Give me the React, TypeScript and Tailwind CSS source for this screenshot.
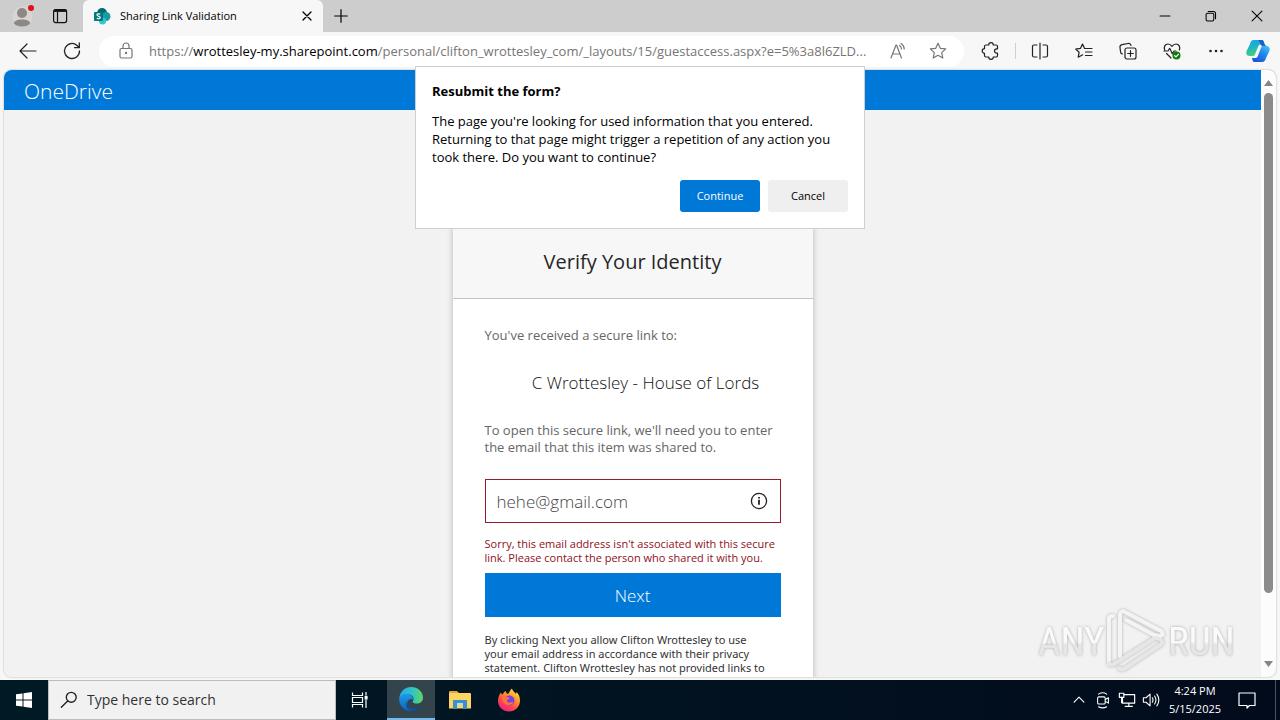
import type { ReactNode } from "react";

const bar = "flex shrink-0 items-center justify-center";

function IconButton({ label, className, children }: { label: string; className: string; children: ReactNode }) {
  return (
    <button type="button" aria-label={label} className={`${bar} ${className}`}>
      {children}
    </button>
  );
}

function Line({ size = 20, width = 1.2, children }: { size?: number; width?: number; children: ReactNode }) {
  return (
    <svg width={size} height={size} viewBox="0 0 20 20" fill="none" stroke="currentColor" strokeWidth={width} strokeLinecap="round" strokeLinejoin="round" aria-hidden="true">
      {children}
    </svg>
  );
}

function TabStrip() {
  return (
    <header className="flex h-8 shrink-0 bg-[#cdcdcd] text-black">
      <div className="flex w-[83px] shrink-0 items-center rounded-br-md pl-3">
        <IconButton label="Profile" className="h-8 w-6">
          <svg width="24" height="24" viewBox="0 0 24 24" aria-hidden="true">
            <circle cx="10.5" cy="12.5" r="10" fill="#d9d5d3" />
            <circle cx="10" cy="9" r="5" fill="#8c8886" />
            <path d="M2 19.5c0-3 3.500-4 8-4s8 1 8 4c-1.500 2-4.500 3-8 3s-6.500-1-8-3z" fill="#8c8886" />
            <circle cx="19" cy="4" r="3" fill="#e0101c" />
          </svg>
        </IconButton>
        <IconButton label="Tab actions" className="ml-2 h-8 w-8">
          <svg width="16" height="16" viewBox="0 0 16 16" fill="none" stroke="#111" strokeWidth="1.2" aria-hidden="true">
            <rect x="1.600" y="1.600" width="13" height="13" rx="2" />
            <path d="M2 3.200h12.500M5.500 4v10.500" />
            <path d="M2 2.600h12.500" strokeWidth="2" />
          </svg>
        </IconButton>
      </div>
      <div className="flex w-60 shrink-0 items-center rounded-t-md bg-[#f7f7f7] pl-[11px]">
        <svg width="17" height="17" viewBox="0 0 17 17" aria-hidden="true">
          <circle cx="8" cy="5" r="5" fill="#036c70" />
          <circle cx="12" cy="8.500" r="4.500" fill="#1a9ba1" />
          <circle cx="8.500" cy="13" r="3.500" fill="#37c6d0" />
          <rect x="0" y="4" width="9" height="9" rx="1" fill="#03787c" />
          <path d="M6.300 6.300c-1.500-.8-3.300-.5-3.300.7 0 1.500 3.300 1.100 3.300 2.600 0 1.200-2 1.500-3.500.6" stroke="#fff" strokeWidth="1.200" fill="none" />
        </svg>
        <span className="ml-[9px] flex-1 text-[11px]">Sharing Link Validation</span>
        <IconButton label="Close tab" className="h-8 w-8">
          <Line size={16} width={1.6}><path d="M5 5l10 10M15 5L5 15" /></Line>
        </IconButton>
      </div>
      <IconButton label="New tab" className="h-8 w-9">
        <Line size={18} width={1.3}><path d="M10 3v14M3 10h14" /></Line>
      </IconButton>
      <div className="ml-auto flex">
        <IconButton label="Minimize" className="h-8 w-[46px]">
          <Line size={14} width={1.5}><path d="M3 10h14" /></Line>
        </IconButton>
        <IconButton label="Restore" className="h-8 w-[46px]">
          <Line size={14} width={1.5}><rect x="3" y="6" width="11" height="11" rx="2" /><path d="M6 3.500h7.500a3 3 0 0 1 3 3V14" /></Line>
        </IconButton>
        <IconButton label="Close" className="h-8 w-[46px]">
          <Line size={14} width={1.5}><path d="M3 3l14 14M17 3L3 17" /></Line>
        </IconButton>
      </div>
    </header>
  );
}

function Toolbar() {
  return (
    <nav className="flex h-[38px] shrink-0 items-center bg-[#f7f7f7] pr-0.5 pl-1.5 text-[#222]">
      <IconButton label="Back" className="h-8 w-11">
        <Line><path d="M18 10H2.500M9 3L2 10l7 7" /></Line>
      </IconButton>
      <IconButton label="Refresh" className="h-8 w-11">
        <Line width={1.3}><path d="M17.500 10a7.500 7.500 0 1 1-2.500-5.600L17 6.500M17.300 2v4.700h-4.700" /></Line>
      </IconButton>
      <div className="ml-[5px] flex h-[31px] min-w-0 flex-1 items-center rounded-full bg-white pr-1 pl-[17px] text-[#767676]">
        <Line><rect x="4" y="7.500" width="12" height="9.500" rx="1.500" /><path d="M7 7.500V5a3 3 0 0 1 6 0v2.500" /><circle cx="10" cy="12" r=".6" fill="currentColor" /></Line>
        <div role="textbox" aria-label="Address and search bar" tabIndex={0} className="ml-[13px] min-w-0 flex-1 text-[13px] leading-5 whitespace-nowrap">
          https://<span className="text-black">wrottesley-my.sharepoint.com</span>/personal/clifton_wrottesley_com/_layouts/15/guestaccess.aspx?e=5%3a8l6ZLD...
        </div>
        <IconButton label="Read aloud" className="h-8 w-9">
          <Line><path d="M3 17L8 4h.5l5 13M4.700 13h7M11.500 4.500c1.300.8 2 2 2 3.500M13 2.500c2 1.200 3.200 3 3.200 5.500" /></Line>
        </IconButton>
        <IconButton label="Add this page to favorites" className="h-8 w-11">
          <Line><path d="M10 2.300l2.300 5 5.400.6-4 3.700 1.100 5.400-4.800-2.700L5.200 17l1.100-5.400-4-3.700 5.400-.6z" /></Line>
        </IconButton>
      </div>
      <IconButton label="Extensions" className="ml-[5px] h-8 w-11">
        <Line><path d="M5 4h2.700a2.300 2.300 0 0 1 4.600 0H15a1.500 1.500 0 0 1 1.500 1.500v2.300h-.8a2.200 2.200 0 0 0 0 4.400h.8v2.300A1.500 1.500 0 0 1 15 16h-2.700a2.300 2.300 0 0 1-4.600 0H5a1.500 1.500 0 0 1-1.500-1.500v-2.200a2.300 2.300 0 0 1 0-4.600V5.500A1.500 1.500 0 0 1 5 4z" /></Line>
      </IconButton>
      <span className="mx-0.5 h-4 w-px shrink-0 bg-[#cfcfcf]" />
      <IconButton label="Split screen" className="h-8 w-11">
        <Line><path d="M10 2v16M7 4H4a1.500 1.500 0 0 0-1.500 1.500v9A1.500 1.500 0 0 0 4 16h3M13 4h3a1.500 1.500 0 0 1 1.500 1.500v9A1.500 1.500 0 0 1 16 16h-3" /></Line>
      </IconButton>
      <IconButton label="Favorites" className="h-8 w-11">
        <Line><path d="M10.500 7.300L8.500 3 6.400 7.400l-4.700.7 3.400 3.200-.9 4.900 4.500-2.400M10.500 7.500h7.500M11.500 11h6.500M11.500 14.500h6.500" /></Line>
      </IconButton>
      <IconButton label="Collections" className="h-8 w-11">
        <Line><rect x="7" y="7" width="11" height="11" rx="2" /><path d="M12.500 9.700v5.600M9.700 12.500h5.600M4.500 13A2.500 2.500 0 0 1 2.500 10.500L2 6.500A2.500 2.500 0 0 1 4 3.700l6-1.200A2.500 2.500 0 0 1 13 4.500" /></Line>
      </IconButton>
      <IconButton label="Browser essentials" className="h-8 w-11">
        <Line><path d="M2.700 9C1.500 6 3 3 6 3c2 0 3.300 1.300 4 2.300C10.700 4.300 12 3 14 3c3 0 4.500 3 3.300 6M2 10h4l1.700-2.700 2.600 5.500L12 10h2M4.500 12.500L9 17" /><circle cx="14.500" cy="14.500" r="4" fill="#107c10" stroke="none" /><path d="M12.700 14.700l1.300 1.200 2.400-2.600" stroke="#fff" /></Line>
      </IconButton>
      <IconButton label="Settings and more" className="h-8 w-11">
        <Line><g fill="currentColor" stroke="none"><circle cx="4.500" cy="10" r="1.300" /><circle cx="10" cy="10" r="1.300" /><circle cx="15.500" cy="10" r="1.300" /></g></Line>
      </IconButton>
      <IconButton label="Copilot" className="h-8 w-10">
        <svg width="24" height="24" viewBox="0 0 24 24" aria-hidden="true">
          <defs>
            <linearGradient id="cpA" x1="0" y1="0" x2="0.300" y2="1"><stop offset="0" stopColor="#15a5e8" /><stop offset=".5" stopColor="#1fb3c8" /><stop offset="1" stopColor="#42d37b" /></linearGradient>
            <linearGradient id="cpB" x1="1" y1="0" x2="0.300" y2="1"><stop offset="0" stopColor="#49c7f5" /><stop offset=".5" stopColor="#2187ee" /><stop offset="1" stopColor="#1b55d8" /></linearGradient>
          </defs>
          <path d="M16 1H8C5.500 1 4.500 3 3.800 5.500L.6 12C-.4 15.500 1 17 3.500 17H7l1.500-.5L12 8c.6-2 1.500-2.500 3-2.500h3C17.500 3.500 17.500 1 16 1z" fill="url(#cpA)" />
          <path d="M8 23h8c2.500 0 3.500-2 4.200-4.500l3.200-6.500C24.400 8.500 23 7 20.500 7H17l-1.500.5L12 16.500c-.6 2-1.500 2.500-3 2.500H6C6.500 20.500 6.500 23 8 23z" fill="url(#cpB)" />
          <path d="M12 1h4c1.500 0 1.800 1.500 2.300 3 .5 1.700 1.200 3 2.700 3h-4.500c-2 0-2.500-4-4.500-6z" fill="#1761ce" />
        </svg>
      </IconButton>
    </nav>
  );
}

function IdentityCard() {
  return (
    <form className="mx-auto mt-[116px] w-[360px] shrink-0 rounded-t-sm bg-white shadow-[0_0_6px_rgba(0,0,0,0.25)]" onSubmit={(e) => e.preventDefault()}>
      <h1 className="border-b border-[#c4c4c4] bg-[#f7f7f7] py-[22px] text-center text-xl leading-7 text-[#262626]">Verify Your Identity</h1>
      <div className="px-8 pt-7 pb-8 text-[13px] leading-[17px] text-[#666]">
        <p>You've received a secure link to:</p>
        <p className="mt-[27px] pl-[26px] text-center text-[17px] leading-6 font-light text-[#111]">C Wrottesley - House of Lords</p>
        <label htmlFor="email" className="mt-[27px] block">To open this secure link, we'll need you to enter<br />the email that this item was shared to.</label>
        <div className="mt-[23px] flex h-11 items-center border border-[#971b2b] pr-3 pl-[11px]">
          <input id="email" type="email" defaultValue="hehe@gmail.com" className="h-full min-w-0 flex-1 bg-transparent text-[17px] leading-6 font-light text-[#444] outline-none" />
          <svg width="18" height="18" viewBox="0 0 18 18" fill="none" stroke="#222" aria-hidden="true">
            <circle cx="9" cy="9" r="7.600" strokeWidth="1.300" />
            <path d="M9 7.800v5M9 5v1.600" strokeWidth="1.800" />
          </svg>
        </div>
        <p className="mt-3.5 text-[11px] leading-[14px] text-[#8f1020]">Sorry, this email address isn't associated with this secure<br />link. Please contact the person who shared it with you.</p>
        <button type="submit" className="mt-2 h-11 w-full bg-[#0078d7] text-[17px] font-light text-white">Next</button>
        <p className="mt-4 font-['Noto_Sans',sans-serif] text-[11px] leading-[14px] text-[#333]">By clicking Next you allow Clifton Wrottesley to use<br />your email address in accordance with their privacy<br />statement. Clifton Wrottesley has not provided links to</p>
      </div>
    </form>
  );
}

function Watermark() {
  return (
    <svg width="204" height="70" viewBox="0 0 204 70" className="pointer-events-none absolute right-[36px] bottom-0.5" aria-label="ANY RUN" role="img">
      <defs>
        <filter id="soft" x="-10%" y="-20%" width="120%" height="140%">
          <feDropShadow dx="0" dy="0" stdDeviation="1.500" floodColor="#777" floodOpacity=".6" />
        </filter>
        <linearGradient id="wm" x1="0" y1="0" x2="0" y2="1"><stop offset=".5" stopColor="#fafafa" /><stop offset=".55" stopColor="#e6e6e6" /></linearGradient>
      </defs>
      <g filter="url(#soft)">
        <g fill="url(#wm)" className="font-['Roboto_Condensed','Liberation_Sans_Narrow','Roboto',sans-serif] text-[39px]">
          <text x="2" y="50">ANY</text>
          <text x="132" y="50">RUN</text>
        </g>
        <g fill="none" stroke="#f4f4f4" strokeWidth="4" strokeLinejoin="round" strokeLinecap="round">
          <path d="M84 51V9q1-4 5-2l36 19q4 4-1 5l-6-1L90 15" />
          <path d="M73 59V14q0-3 4-3" />
          <path d="M73 58q1 3 5 1l38-24q4-4 9 0 3 3-1 5L88 64q-3 1-5-1" stroke="#e6e6e6" />
        </g>
      </g>
    </svg>
  );
}

function ResubmitDialog() {
  return (
    <section role="dialog" aria-labelledby="resubmit" className="absolute top-[66px] left-1/2 w-[450px] -translate-x-1/2 border border-[#cfcfcf] bg-white px-4 pt-[15px] pb-4 text-black">
      <h2 id="resubmit" className="text-[13px] leading-[18px] font-bold">Resubmit the form?</h2>
      <p className="mt-3 text-[13px] leading-[18px]">The page you're looking for used information that you entered.<br />Returning to that page might trigger a repetition of any action you<br />took there. Do you want to continue?</p>
      <div className="mt-3.5 flex justify-end gap-2 text-[11px]">
        <button type="button" className="h-8 w-20 rounded-[3px] bg-[#0078d7] text-white">Continue</button>
        <button type="button" className="h-8 w-20 rounded-[3px] bg-[#efefef]">Cancel</button>
      </div>
    </section>
  );
}

function Taskbar() {
  return (
    <footer className="flex h-10 shrink-0 items-stretch bg-linear-to-r from-[#001a25] to-[#020b1c] text-white">
      <IconButton label="Start" className="w-12">
        <svg width="16" height="16" viewBox="0 0 16 16" fill="#fff" aria-hidden="true">
          <path d="M0 2.300L6.500 1.400V7.500H0zM7.500 1.200L16 0v7.500H7.500zM0 8.500h6.500v6.100L0 13.700zM7.500 8.500H16V16l-8.500-1.200z" />
        </svg>
      </IconButton>
      <label className="flex w-72 shrink-0 items-center border border-[#bdbdbd] bg-[#f1f1f1] pl-[11px] text-[#222]">
        <Line size={18} width={1.5}><circle cx="12.500" cy="7" r="5.500" /><path d="M8.500 11L1.500 18" /></Line>
        <input aria-label="Search" placeholder="Type here to search" className="ml-[9px] min-w-0 flex-1 bg-transparent text-sm outline-none placeholder:text-[#333]" />
      </label>
      <IconButton label="Task view" className="w-12">
        <svg width="18" height="18" viewBox="0 0 18 18" fill="none" stroke="#fff" strokeWidth="1.200" aria-hidden="true">
          <path d="M1.500 1.500v3h10v-3M1.500 16.500v-3h10v3M1.500 6.500h10v5h-10zM15 1v3.500M15 9v8" />
          <rect x="14.200" y="5.500" width="1.800" height="2.500" fill="#fff" />
        </svg>
      </IconButton>
      <IconButton label="Microsoft Edge" className="ml-[3px] w-12 border-b-2 border-[#76b9ed] bg-[#33444d]">
        <svg width="24" height="24" viewBox="0 0 24 24" aria-hidden="true">
          <defs>
            <linearGradient id="edA" x1="0" y1=".3" x2="1" y2=".3"><stop offset="0" stopColor="#2aa5e8" /><stop offset=".55" stopColor="#2fc3c8" /><stop offset="1" stopColor="#5fd85a" /></linearGradient>
            <linearGradient id="edB" x1="0" y1="0" x2="0" y2="1"><stop offset="0" stopColor="#1b9de8" /><stop offset="1" stopColor="#1160b8" /></linearGradient>
          </defs>
          <path d="M.3 11C1 4.500 6 0 12 0c7 0 12 5 12 10.500 0 4-3 6-6.300 6-3 0-4.700-1.200-3.700-2.500 1.500-2 .5-6-4-6.500C6 7 2 8.500.3 11z" fill="url(#edA)" />
          <path d="M.2 11C1.500 8 5 6.500 8.500 7c4 .5 6 3.500 5.500 5.800-2-1.800-5.500-.3-5.500 3 0 4 4 6.700 9 7-9 4-18-2.300-17.300-11.800z" fill="url(#edB)" />
          <path d="M8.500 13.500c-1.500 5 3.500 8.500 8 8 2.300-.3 4.500-1.700 5.700-3.200-1 3-4.700 5.500-8.700 5.700C7 23.500 5.500 16.500 8.500 13.500z" fill="#134f98" />
        </svg>
      </IconButton>
      <IconButton label="File Explorer" className="w-[50px]">
        <svg width="22" height="20" viewBox="0 0 22 20" aria-hidden="true">
          <path d="M0 2q0-1 1-1h7l2 2H0z" fill="#e8a33d" />
          <path d="M0 3h21q1 0 1 1v14.500H0z" fill="#fcd462" />
          <path d="M4 11q0-1 1-1h12q1 0 1 1v8h-4v-4H8v4H4z" fill="#3b8fd0" />
          <path d="M8 13h6v2H8z" fill="#b4dcf5" />
        </svg>
      </IconButton>
      <IconButton label="Firefox" className="w-12">
        <svg width="24" height="24" viewBox="0 0 24 24" aria-hidden="true">
          <defs>
            <linearGradient id="ffA" x1=".85" y1="0" x2=".2" y2="1"><stop offset="0" stopColor="#fff04a" /><stop offset=".35" stopColor="#ff9a25" /><stop offset=".7" stopColor="#ff4052" /><stop offset="1" stopColor="#e3208f" /></linearGradient>
          </defs>
          <path d="M4 4.500c.3 1 1 1.600 1.700 2 .8-2 2-3.200 3.300-3.500-.3 1.500.5 2.500 2 3 1.300-1 1.500-3.500 4-5.500.3 2.500 2.500 3.300 3.800 5.300l.9-1.500C22 6.500 23 9.500 23 12.500 23 19 18 23.500 12 23.500S1 19 1 12.700C1 9 2.500 6.500 4 4.500z" fill="url(#ffA)" />
          <circle cx="12.500" cy="12.500" r="5" fill="#7542e5" />
          <path d="M5 9c2-1 4 .3 6 .3 2 .2 1.500 1.700 0 2.200-1.500.5-1.500 2.500.5 3 2 .6 3.500-.7 5-.5-1 2-3 3.500-5.500 3C7 16.500 5 13 5 9z" fill="#ff7139" />
        </svg>
      </IconButton>
      <div className="ml-auto flex items-stretch">
        <IconButton label="Show hidden icons" className="w-6">
          <Line size={14} width={1.6}><path d="M3 13l7-7 7 7" /></Line>
        </IconButton>
        <IconButton label="Meet now" className="w-6">
          <Line size={18} width={1.2}><rect x="4" y="6.500" width="8.500" height="8" rx="1.500" /><path d="M12.500 9.500l3.500-2v6l-3.500-2M5 3.500q5-3 9 0M5 17.500q5 2.500 9 0" /></Line>
        </IconButton>
        <IconButton label="Network" className="w-6">
          <Line size={18} width={1.3}><path d="M7 4h11.500v9.500H5V8M12 13.500V17M8 17h8" /><rect x="1.500" y="2.500" width="5" height="4.500" /><path d="M4 7v6" /></Line>
        </IconButton>
        <IconButton label="Volume" className="w-6">
          <Line size={18} width={1.2}><path d="M1.500 7.500h3L9 3.500v13l-4.500-4h-3zM11.500 7.500q1.500 2.500 0 5M14 5.500q3 4.500 0 9M16.500 3.500q4.500 6.500 0 13" /></Line>
        </IconButton>
        <div className="flex w-16 flex-col items-center justify-center text-[11px] leading-[18px] whitespace-nowrap">
          <span>4:24 PM</span>
          <span>5/15/2025</span>
        </div>
        <IconButton label="Notifications" className="w-10">
          <Line size={20} width={1.2}><path d="M2 3h16v12.500h-5.500L10 18v-2.500H2z" /></Line>
        </IconButton>
        <span className="ml-2 w-[5px] border-l border-[#4a5260]" />
      </div>
    </footer>
  );
}

export default function App() {
  return (
    <div className="relative flex h-screen flex-col overflow-hidden bg-[#f7f7f7] font-['Open_Sans','Noto_Sans',sans-serif]">
      <TabStrip />
      <Toolbar />
      <main className="relative mx-1 mb-[3px] flex min-h-0 flex-1 overflow-hidden rounded-lg bg-[#fcfcfc] shadow-[0_0_2px_rgba(0,0,0,0.35)]">
        <div className="flex min-w-0 flex-1 flex-col overflow-hidden bg-[#f2f2f2]">
          <div className="flex h-10 shrink-0 items-center bg-[#0078d7] px-5 pt-1 text-[21px] font-light text-white">OneDrive</div>
          <IdentityCard />
        </div>
        <div className="flex w-[15px] shrink-0 flex-col items-center py-2.5">
          <svg width="9" height="6" viewBox="0 0 9 6" fill="#858585" aria-hidden="true"><path d="M4.500 0L9 6H0z" /></svg>
          <div className="mt-[7px] flex w-full flex-1 flex-col items-center">
            <span className="h-[88%] w-[9px] rounded-full bg-[#8b8b8b]" />
          </div>
          <svg width="9" height="6" viewBox="0 0 9 6" fill="#858585" aria-hidden="true"><path d="M4.500 6L0 0h9z" /></svg>
        </div>
        <Watermark />
      </main>
      <Taskbar />
      <ResubmitDialog />
    </div>
  );
}
